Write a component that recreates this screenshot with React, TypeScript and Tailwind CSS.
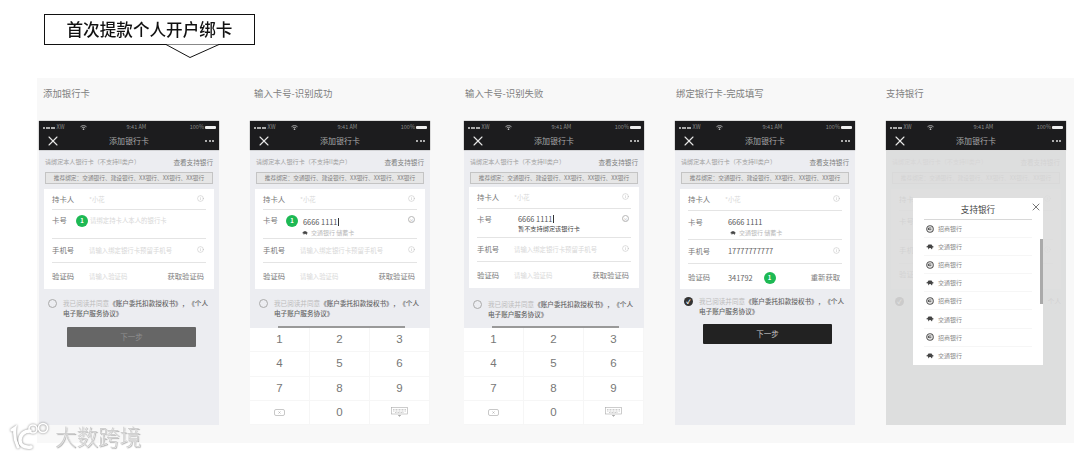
import type { ReactNode } from "react";
import { Info, X } from "lucide-react";

const font = "[font-family:'Noto_Sans_CJK_SC','Liberation_Sans',sans-serif]";

function StatusBar() {
  return (
    <div className="flex h-[10px] items-center justify-between pl-[4px] pr-[3px] pt-[3px] text-[5.5px] leading-none text-[#8a8a8a]">
      <span className="flex w-[44px] items-center justify-between">
        <span className="flex items-center gap-[0.5px]">
          <i className="h-[2px] w-[2px] rounded-full bg-[#ddd]" />
          <i className="h-[2px] w-[2px] rounded-full bg-[#ddd]" />
          <i className="h-[2px] w-[2px] rounded-full bg-[#ddd]" />
          <i className="h-[2px] w-[2px] rounded-full bg-[#ddd]" />
          <i className="h-[2px] w-[2px] rounded-full bg-[#ddd]" />
          <span className="ml-[1px]">XW</span>
        </span>
        <svg width="7" height="5" viewBox="0 0 14 10" fill="none" stroke="#ccc" strokeWidth="1.6">
          <path d="M1 3.5c3.5-3 8.5-3 12 0M3.5 6c2-1.7 5-1.7 7 0" />
          <circle cx="7" cy="8.5" r="1" fill="#ccc" />
        </svg>
      </span>
      <span className="mr-[4px]">9:41 AM</span>
      <span className="flex items-center gap-[1px]">
        100%
        <span className="h-[3px] w-[11px] rounded-[1px] bg-[#eee]" />
      </span>
    </div>
  );
}

function Header() {
  return (
    <div className="bg-[#1c1c1e] shadow-[0_0_1px_#555]">
      <StatusBar />
      <div className="relative flex h-[19px] items-center justify-between pl-[6px] pr-[5px]">
        <X className="h-[16px] w-[16px] text-[#e8e8e8]" strokeWidth={1.6} />
        <span className="absolute inset-x-0 text-center text-[8px] text-[#a8a8a8]">添加银行卡</span>
        <span className="flex gap-[1.5px]">
          <i className="h-[2px] w-[2px] rounded-full bg-[#ddd]" />
          <i className="h-[2px] w-[2px] rounded-full bg-[#ddd]" />
          <i className="h-[2px] w-[2px] rounded-full bg-[#ddd]" />
        </span>
      </div>
    </div>
  );
}

function Notice() {
  return (
    <div className="px-[6px] pt-[8px]">
      <div className="flex h-[8px] items-center justify-between leading-none">
        <span className="text-[6.1px] text-[#a0a0a0] [text-spacing-trim:space-all]">请绑定本人银行卡（不支持II类户）</span>
        <span className="text-[6.6px] text-[#808080]">查看支持银行</span>
      </div>
      <div className="relative mt-[6px] flex h-[12px] items-center justify-center border border-[#c4c4c4] bg-[#e6e6e6] text-[5.7px] leading-none text-[#808080] [text-spacing-trim:space-all]">
        推荐绑定：交通银行、建设银行、XX银行、XX银行、XX银行
      </div>
    </div>
  );
}

function Badge() {
  return (
    <span className="flex h-[12px] w-[12px] shrink-0 items-center justify-center rounded-full bg-[#1db954] text-[6px] font-bold leading-none text-white">
      1
    </span>
  );
}

function Row({ h, label, last, pt = 5, children, icon }: { h: number; label: string; last?: boolean; pt?: number; children?: ReactNode; icon?: ReactNode }) {
  return (
    <div className="px-[8px]">
      <div className={`flex text-[7.4px] leading-[10px] ${last ? "" : "border-b border-[#e4e4e4]"}`} style={{ height: h, paddingTop: pt }}>
        <span className="w-[37px] shrink-0 text-[#777]">{label}</span>
        <div className="min-w-0 flex-1">{children}</div>
        {icon}
      </div>
    </div>
  );
}

function InfoIcon() {
  return <Info className="mr-[2px] mt-[1px] h-[7px] w-[7px] text-[#b5b5b5]" strokeWidth={1.5} />;
}

function ClearIcon() {
  return (
    <span className="mr-[2px] mt-[1px] flex h-[7px] w-[7px] items-center justify-center rounded-full border border-[#b5b5b5] text-[5px] leading-none text-[#b5b5b5]">
      ×
    </span>
  );
}

function Hint({ children }: { children: ReactNode }) {
  return <span className="text-[6.4px] text-[#d8d8d8]">{children}</span>;
}

function GetCode({ children }: { children: ReactNode }) {
  return <span className="mr-[2px] text-[7.3px] text-[#808080]">{children}</span>;
}

function BankGlyph({ kind }: { kind: "zs" | "jt" }) {
  return kind === "zs" ? (
    <svg width="8" height="8" viewBox="0 0 16 16" fill="none" stroke="#555" strokeWidth="2.2">
      <circle cx="8" cy="8" r="6.5" />
      <path d="M11 6H6.5a1.6 1.6 0 0 0 0 3.5H11" />
    </svg>
  ) : (
    <svg width="8" height="6" viewBox="0 0 16 12" fill="#444">
      <path d="M0 6l3-2 2-3h6l2 3 3 2-3 1-1 4-3-3H7l-2 3-1-4z" />
    </svg>
  );
}

function CardSub() {
  return (
    <div className="mt-[1px] flex items-center gap-[3px] text-[6px] text-[#b8b8b8]">
      <span className="ml-[2px] flex w-[6px] justify-center">
        <BankGlyph kind="jt" />
      </span>
      交通银行 储蓄卡
    </div>
  );
}

function Caret() {
  return <span className="ml-[0.5px] inline-block h-[8px] w-[1px] translate-y-[1px] bg-[#333]" />;
}

function Radio({ checked }: { checked?: boolean }) {
  return checked ? (
    <span className="flex h-[9px] w-[9px] shrink-0 items-center justify-center rounded-full bg-[#333] text-[6px] font-bold leading-none text-white">
      ✓
    </span>
  ) : (
    <span className="h-[9px] w-[9px] shrink-0 rounded-full border border-[#aaa]" />
  );
}

function Agreement({ checked, top }: { checked?: boolean; top: number }) {
  return (
    <div className="flex pl-[9px]" style={{ paddingTop: top }}>
      <Radio checked={checked} />
      <p className="ml-[6px] whitespace-nowrap text-[6.6px] leading-[9.5px] text-[#bcbcbc] [text-spacing-trim:space-all]">
        我已阅读并同意<b className="font-medium text-[#666]">《账户委托扣款授权书》，《个人</b>
        <br />
        <b className="font-medium text-[#666]">电子账户服务协议》</b>
      </p>
    </div>
  );
}

function NextButton({ active, top }: { active?: boolean; top: number }) {
  return (
    <div
      className={`ml-[28px] flex h-[20px] w-[129px] items-center justify-center rounded-[1px] text-[7.5px] ${
        active ? "bg-[#222] text-[#c8c8c8]" : "bg-[#666] text-[#909090]"
      }`}
      style={{ marginTop: top }}
    >
      下一步
    </div>
  );
}

function Keypad() {
  const keys = ["1", "2", "3", "4", "5", "6", "7", "8", "9", "del", "0", "kb"];
  return (
    <div className="absolute inset-x-0 bottom-0 h-[97px] bg-white">
      <div className="absolute left-[28px] top-[-2px] h-[2px] w-[127px] bg-[#999]" />
      <div className="grid h-full grid-cols-3 grid-rows-4">
        {keys.map((k) => (
          <div key={k} className="flex items-center justify-center border-b border-r border-[#f6f6f6] text-[11.5px] text-[#777] [font-family:'Liberation_Sans',sans-serif]">
            {k === "del" && (
              <svg width="11" height="7" viewBox="0 0 22 14" fill="none" stroke="#b0b0b0" strokeWidth="1.4">
                <rect x="1" y="1" width="20" height="12" rx="3" />
                <path d="M9 5l4 4M13 5l-4 4" />
              </svg>
            )}
            {k === "kb" && (
              <svg width="17" height="10" viewBox="0 0 34 20" fill="none" stroke="#aaa" strokeWidth="1.2">
                <rect x="1" y="1" width="32" height="13" />
                <path d="M4 5h26M4 8h26M8 11h18" strokeDasharray="2 1" />
                <path d="M14 16l3 3 3-3" fill="#aaa" />
              </svg>
            )}
            {k !== "del" && k !== "kb" && k}
          </div>
        ))}
      </div>
    </div>
  );
}

function Card({ mt, children }: { mt: number; children: ReactNode }) {
  return (
    <div className="mx-[5px] bg-white" style={{ marginTop: mt }}>
      {children}
    </div>
  );
}

function Phone({ children }: { children: ReactNode }) {
  return (
    <div className="flex h-[304px] w-[180px] flex-col bg-[#ecedf1]">
      <Header />
      <div className="relative flex-1">{children}</div>
    </div>
  );
}

function Step({ title, dx, ml, children }: { title: string; dx: number; ml: number; children: ReactNode }) {
  return (
    <div className="w-[180px] shrink-0" style={{ marginLeft: ml }}>
      <h3 className="mb-[21px] h-[14px] text-[9.4px] font-normal leading-[14px] text-[#808080]" style={{ paddingLeft: dx }}>
        {title}
      </h3>
      {children}
    </div>
  );
}

function SupportModal() {
  const banks = ["zs", "jt", "zs", "jt", "zs", "jt", "zs", "jt"] as const;
  return (
    <div className="absolute left-[27px] top-[48px] h-[167px] w-[130px] bg-white">
      <div className="mx-[11px] flex h-[22px] items-center justify-center border-b border-[#d8d8d8] pt-[2px] text-[8.6px] text-[#444]">支持银行</div>
      <X className="absolute right-[1px] top-[3px] h-[12px] w-[12px] text-[#555]" strokeWidth={1.6} />
      <div className="absolute right-0 top-[41px] h-[65px] w-[3px] bg-[#aaa]" />
      <div className="mx-[11px]">
        {banks.map((b, i) => (
          <div key={i} className="flex h-[18.1px] items-center gap-[4px] border-b border-[#f6f6f6] pl-[2px] text-[6px] text-[#888] last:border-b-0">
            <BankGlyph kind={b} />
            {b === "zs" ? "招商银行" : "交通银行"}
          </div>
        ))}
      </div>
    </div>
  );
}

export default function App() {
  return (
    <div className={`relative h-[456px] w-[1080px] overflow-hidden bg-white pt-[14px] ${font}`}>
      <div className="blur-[0.7px]">
        <div className="relative ml-[44px] flex h-[31px] w-[211px] items-center justify-center border-[1.5px] border-[#111] text-[16.6px] font-medium leading-none text-[#111]">
          首次提款个人开户绑卡
          <svg className="absolute left-[121px] top-[28px]" width="56" height="17" viewBox="0 0 56 17" fill="white" stroke="#111" strokeWidth="1">
            <path d="M0 1.5L24 14.5L53 1.5" />
          </svg>
        </div>

        <div className="ml-[37px] mt-[33px] flex h-[365px] w-[1037px] bg-[#f8f8f8] pt-[8px]">
          <Step title="添加银行卡" dx={4} ml={2}>
            <Phone>
              <Notice />
              <Card mt={5}>
                <Row h={21} label="持卡人" icon={<InfoIcon />}>
                  <Hint>*小花</Hint>
                </Row>
                <Row h={29} label="卡号">
                  <div className="-ml-[13px] flex items-center gap-[2px]">
                    <Badge />
                    <Hint>请绑定持卡人本人的银行卡</Hint>
                  </div>
                </Row>
                <Row h={24} pt={6} label="手机号" icon={<InfoIcon />}>
                  <Hint>请输入绑定银行卡预留手机号</Hint>
                </Row>
                <Row h={26} pt={8} label="验证码" last icon={<GetCode>获取验证码</GetCode>}>
                  <Hint>请输入验证码</Hint>
                </Row>
              </Card>
              <Agreement top={10} />
              <NextButton top={9} />
            </Phone>
          </Step>

          <Step title="输入卡号-识别成功" dx={4} ml={31}>
            <Phone>
              <Notice />
              <Card mt={5}>
                <Row h={21} label="持卡人" icon={<InfoIcon />}>
                  <Hint>*小花</Hint>
                </Row>
                <Row h={29} label="卡号" icon={<ClearIcon />}>
                  <div className="-ml-[14px] flex items-center gap-[5px] text-[#555]">
                    <Badge />
                    <span className="leading-[9px]">
                      6666 1111
                      <Caret />
                    </span>
                  </div>
                  <CardSub />
                </Row>
                <Row h={24} pt={6} label="手机号" icon={<InfoIcon />}>
                  <Hint>请输入绑定银行卡预留手机号</Hint>
                </Row>
                <Row h={26} pt={8} label="验证码" last icon={<GetCode>获取验证码</GetCode>}>
                  <Hint>请输入验证码</Hint>
                </Row>
              </Card>
              <Agreement top={10} />
              <Keypad />
            </Phone>
          </Step>

          <Step title="输入卡号-识别失败" dx={1} ml={34}>
            <Phone>
              <Notice />
              <Card mt={3}>
                <Row h={22} label="持卡人" icon={<InfoIcon />}>
                  <Hint>*小花</Hint>
                </Row>
                <Row h={29} label="卡号" icon={<ClearIcon />}>
                  <div className="ml-[4px] text-[#555]">
                    6666 1111
                    <Caret />
                  </div>
                  <div className="ml-[4px] text-[6.2px] leading-[10px] text-[#444]">暂不支持绑定该银行卡</div>
                </Row>
                <Row h={24} pt={6} label="手机号" icon={<InfoIcon />}>
                  <Hint>请输入绑定银行卡预留手机号</Hint>
                </Row>
                <Row h={26} pt={8} label="验证码" last icon={<GetCode>获取验证码</GetCode>}>
                  <Hint>请输入验证码</Hint>
                </Row>
              </Card>
              <Agreement top={12} />
              <Keypad />
            </Phone>
          </Step>

          <Step title="绑定银行卡-完成填写" dx={1} ml={31}>
            <Phone>
              <Notice />
              <Card mt={5}>
                <Row h={22} label="持卡人" icon={<InfoIcon />}>
                  <Hint>*小花</Hint>
                </Row>
                <Row h={29} label="卡号" pt={6}>
                  <div className="ml-[3px] text-[#555]">6666 1111</div>
                  <div className="ml-[3px]">
                    <CardSub />
                  </div>
                </Row>
                <Row h={24} pt={6} label="手机号" icon={<InfoIcon />}>
                  <span className="ml-[3px] text-[#666]">17777777777</span>
                </Row>
                <Row h={25} pt={8} label="验证码" last icon={<GetCode>重新获取</GetCode>}>
                  <div className="ml-[3px] flex items-center gap-[11px] text-[#666]">
                    341792
                    <Badge />
                  </div>
                </Row>
              </Card>
              <Agreement checked top={8} />
              <NextButton active top={8} />
            </Phone>
          </Step>

          <Step title="支持银行" dx={0} ml={31}>
            <Phone>
              <Notice />
              <Card mt={5}>
                <div className="h-[100px]">
                  <Row h={22} label="持卡" icon={<InfoIcon />} />
                  <Row h={29} label="卡号" />
                  <Row h={24} label="手机" icon={<InfoIcon />} />
                  <Row h={25} label="验证" last />
                </div>
              </Card>
              {/* only what shows either side of the dialog */}
              <div className="flex items-center justify-between pl-[9px] pr-[5px] pt-[8px]">
                <Radio checked />
                <span className="text-[6.6px] leading-[9.5px] text-[#666]">个人</span>
              </div>
              <div className="absolute inset-0 bg-[#dbdbdb]/90" />
              <SupportModal />
            </Phone>
          </Step>
        </div>
      </div>

      {/* watermark */}
      <div className="absolute left-[10px] top-[421px] flex items-center blur-[0.4px]">
        <svg width="42" height="30" viewBox="0 0 42 30" fill="none" stroke="white" strokeLinecap="round" className="drop-shadow-[0_0_1px_rgba(0,0,0,0.5)]">
          <path d="M2 9l3-2c-1 6 0 13 3 19" strokeWidth="3" />
          <path d="M20 10c-6 0-10 4-10 9 0 5 4 8 11 7" strokeWidth="3.5" />
          <circle cx="23" cy="8" r="4" strokeWidth="1.6" />
          <circle cx="33" cy="7" r="4.5" strokeWidth="1.6" />
        </svg>
        <span className="ml-[3px] text-[21.5px] font-light leading-none text-[#d0d0d0] [text-shadow:0_0_1px_#fff,0_0_2px_#fff,1px_1px_1px_#999]">大数跨境</span>
      </div>
    </div>
  );
}
